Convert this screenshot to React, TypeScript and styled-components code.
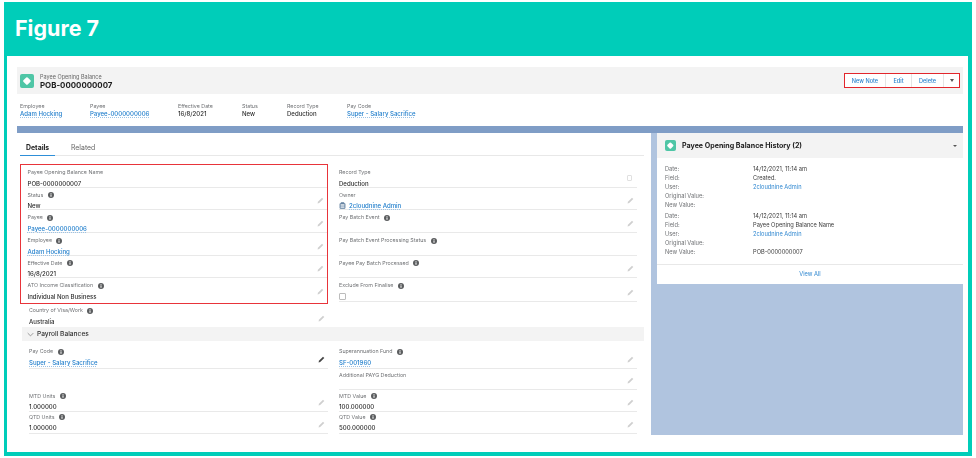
import React from "react";
import styled, { createGlobalStyle } from "styled-components";

const Global = createGlobalStyle`
  html, body { margin: 0; padding: 0; background: #fff; }
  body { font-family: Inter, "Liberation Sans", sans-serif; }
  * { box-sizing: border-box; }
`;

const Frame = styled.div`
  width: 968px;
  height: 454px;
  margin: 2px 0 0 4px;
  background: #00cdb9;
  display: flex;
  flex-direction: column;
  overflow: hidden;
`;

const Banner = styled.h1`
  height: 54px;
  margin: 0;
  padding: 13px 0 0 11px;
  color: #fff;
  font-family: Inter, "Open Sans", sans-serif;
  font-size: 21.5px;
  line-height: 26px;
  font-weight: 700;
`;

const Sheet = styled.div`
  flex: 1;
  margin: 0 4px 4px 3px;
  padding: 11px 5px 17px 10px;
  background: #fff;
  display: flex;
  flex-direction: column;
  filter: blur(0.35px);
`;

const RecordHeader = styled.header`
  height: 27px;
  flex: none;
  background: #f3f3f3;
  padding: 0 0 0 3px;
  display: flex;
  align-items: center;
`;

const Badge = styled.div<{ $size: number }>`
  width: ${(p) => p.$size}px;
  height: ${(p) => p.$size}px;
  flex: none;
  border-radius: 2px;
  background: #4fc6a6;
  display: flex;
  align-items: center;
  justify-content: center;
  &::after {
    content: "";
    width: ${(p) => p.$size * 0.42}px;
    height: ${(p) => p.$size * 0.42}px;
    background: #fff;
    border-radius: 1px;
    transform: rotate(45deg);
  }
`;

const HeaderText = styled.div`
  margin-left: 6px;
  flex: 1;
`;

const ObjectName = styled.div`
  font-size: 5.5px;
  line-height: 8px;
  color: #666;
  padding-top: 1px;
`;

const RecordName = styled.div`
  font-size: 7.9px;
  line-height: 9px;
  font-weight: 700;
  color: #1c1c1c;
`;

const ButtonGroup = styled.div`
  width: 116px;
  height: 15px;
  margin-right: 3px;
  border: 1px solid #e2262c;
  background: #fff;
  display: flex;
`;

const ActionButton = styled.button<{ $width: number }>`
  width: ${(p) => p.$width}px;
  flex: none;
  padding: 0;
  border: 0;
  border-right: 1px solid #e4e4e4;
  background: none;
  color: #2b84cf;
  font: 500 5.6px Inter, sans-serif;
  display: flex;
  align-items: center;
  justify-content: center;
  &:last-child { border-right: 0; }
`;

const Caret = styled.span`
  width: 0;
  height: 0;
  border-left: 2.5px solid transparent;
  border-right: 2.5px solid transparent;
  border-top: 3px solid #555;
`;

const Highlights = styled.div`
  height: 32px;
  flex: none;
  padding: 7.5px 0 0 3px;
  display: flex;
`;

const HighlightItem = styled.div<{ $width: number }>`
  width: ${(p) => p.$width}px;
  flex: none;
`;

const SmallLabel = styled.div`
  font-size: 5.3px;
  line-height: 8.5px;
  color: #6f7174;
  white-space: nowrap;
`;

const Value = styled.div<{ $link?: boolean }>`
  font-size: 6.05px;
  font-weight: 500;
  line-height: 8px;
  color: ${(p) => (p.$link ? "#2480cd" : "#2e2e2e")};
  white-space: nowrap;
  ${(p) => p.$link && "text-decoration: underline dotted #9cc3e6 0.5px; text-underline-offset: 1px;"}
`;

const Stripe = styled.div`
  height: 7px;
  flex: none;
  background: #7f9dc6;
`;

const Columns = styled.div`
  flex: 1;
  display: flex;
  background: #b0c4df;
`;

const MainPanel = styled.main`
  width: 634px;
  flex: none;
  background: #fff;
  margin-bottom: -17px;
  padding: 0 3px;
`;

const Tabs = styled.nav`
  height: 23px;
  margin-right: 4px;
  border-bottom: 1px solid #e8e8e8;
  display: flex;
`;

const Tab = styled.div<{ $active?: boolean }>`
  width: ${(p) => (p.$active ? 35 : 48)}px;
  padding-left: ${(p) => (p.$active ? 6 : 16)}px;
  height: 23px;
  font-size: 6.9px;
  line-height: 29px;
  font-weight: ${(p) => (p.$active ? 700 : 400)};
  color: ${(p) => (p.$active ? "#222" : "#666")};
  ${(p) => p.$active && "border-bottom: 1.5px solid #2e8fd8;"}
`;

const TopFields = styled.div`
  margin-top: 8px;
  display: flex;
`;

const Highlighted = styled.div`
  width: 308px;
  height: 140px;
  border: 1px solid #e8343a;
  padding: 0 0 0 6.5px;
`;

const RightStack = styled.div`
  width: 298px;
  margin-left: 11px;
  padding-top: 1px;
`;

const FieldBox = styled.div<{ $height?: number; $line?: boolean; $top?: number }>`
  position: relative;
  height: ${(p) => p.$height ?? 22.7}px;
  padding-top: ${(p) => p.$top ?? 3}px;
  border-bottom: ${(p) => (p.$line === false ? "0" : "1px solid #e9e9e9")};
`;

const FieldLabel = styled.div`
  height: 9px;
  font-size: 5.3px;
  line-height: 9px;
  color: #707275;
  white-space: nowrap;
  display: flex;
  align-items: center;
  gap: 4.5px;
`;

const FieldValue = styled(Value)`
  margin-top: 1.5px;
  height: 9px;
  line-height: 9px;
  display: flex;
  align-items: center;
  gap: 3px;
`;

const EditIcon = styled.svg<{ $dark?: boolean }>`
  position: absolute;
  right: 3px;
  bottom: 5px;
  width: 7px;
  height: 7px;
  fill: ${(p) => (p.$dark ? "#444" : "#cfcfcf")};
`;

const LockBox = styled.span`
  position: absolute;
  right: 5px;
  bottom: 6px;
  width: 5px;
  height: 6px;
  border: 0.6px solid #e0e0e0;
  border-radius: 1px;
`;

const Check = styled.span`
  width: 7px;
  height: 7px;
  margin-top: 1px;
  display: block;
  border: 0.7px solid #bcbcbc;
  border-radius: 1px;
`;

const LoneField = styled.div`
  width: 299px;
  margin-left: 9px;
`;

const SectionBar = styled.div`
  width: 622px;
  height: 14px;
  margin-left: 2px;
  padding-left: 5px;
  background: #f3f3f3;
  display: flex;
  align-items: center;
  gap: 3px;
  font-size: 6.6px;
  font-weight: 500;
  color: #333;
`;

const FieldGrid = styled.div`
  margin: 3px 0 0 9px;
  display: grid;
  grid-template-columns: 299px 298px;
  column-gap: 11px;
`;

const Aside = styled.aside`
  flex: 1;
  padding-left: 6px;
`;

const HistoryCard = styled.section`
  background: #fff;
`;

const CardHeader = styled.div`
  height: 25px;
  padding: 0 6px 0 8px;
  background: #f3f3f3;
  display: flex;
  align-items: center;
  gap: 6px;
  font-size: 7.1px;
  font-weight: 700;
  color: #222;
`;

const CardTitle = styled.span`
  flex: 1;
`;

const CardHeaderCaret = styled(Caret)`
  border-left-width: 2px;
  border-right-width: 2px;
  border-top-width: 2.5px;
`;

const Entry = styled.dl`
  margin: 0;
  padding: 7px 0 0 8px;
  display: grid;
  grid-template-columns: 88px 1fr;
  grid-auto-rows: 8.95px;
  font-size: 5.7px;
  line-height: 8.95px;
  & + & { padding-top: 2.5px; }
`;

const EntryLabel = styled.dt`
  color: #6f7174;
`;

const EntryValue = styled.dd<{ $link?: boolean }>`
  margin: 0;
  color: ${(p) => (p.$link ? "#2f87d0" : "#3a3a3a")};
`;

const CardFooter = styled.div`
  height: 20px;
  margin-top: 7px;
  border-top: 1px solid #e8e8e8;
  color: #2f87d0;
  font-size: 5.7px;
  line-height: 18px;
  text-align: center;
`;

const Info = () => (
  <svg width="6" height="6" viewBox="0 0 12 12">
    <circle cx="6" cy="6" r="6" fill="#5a5c5e" />
    <rect x="5" y="5" width="2" height="4.5" fill="#fff" />
    <rect x="5" y="2.5" width="2" height="1.8" fill="#fff" />
  </svg>
);

const Pencil = ({ dark }: { dark?: boolean }) => (
  <EditIcon $dark={dark} viewBox="0 0 12 12">
    <path d="M8.6 1.2l2.2 2.2-7 7L1 11l.6-2.8z" />
  </EditIcon>
);

const OwnerIcon = () => (
  <svg width="7" height="7" viewBox="0 0 12 12">
    <rect x="1" y="2" width="10" height="9.5" rx="1.5" fill="#5d7c9c" />
    <rect x="3" y="0.5" width="6" height="2.5" rx="1" fill="#5d7c9c" />
    <rect x="2.6" y="4" width="6.8" height="2.2" fill="#fff" />
    <rect x="2.6" y="7.4" width="6.8" height="2.6" fill="#dfe7ef" />
  </svg>
);

const Chevron = () => (
  <svg width="7" height="5" viewBox="0 0 10 6" fill="none" stroke="#777" strokeWidth="1">
    <path d="M1 1l4 4 4-4" />
  </svg>
);

type FieldProps = {
  label: string;
  value?: string;
  link?: boolean;
  info?: boolean;
  edit?: "none" | "light" | "dark" | "lock";
  height?: number;
  top?: number;
  line?: boolean;
  children?: React.ReactNode;
};

const Field = ({ label, value, link, info = true, edit = "light", height, top, line, children }: FieldProps) => (
  <FieldBox $height={height} $line={line} $top={top}>
    <FieldLabel>
      {label}
      {info && <Info />}
    </FieldLabel>
    <FieldValue $link={link}>
      {children}
      {value}
    </FieldValue>
    {edit === "light" && <Pencil />}
    {edit === "dark" && <Pencil dark />}
    {edit === "lock" && <LockBox />}
  </FieldBox>
);

const highlights = [
  { label: "Employee", value: "Adam Hocking", link: true, width: 70 },
  { label: "Payee", value: "Payee-0000000006", link: true, width: 88 },
  { label: "Effective Date", value: "16/8/2021", width: 64 },
  { label: "Status", value: "New", width: 45 },
  { label: "Record Type", value: "Deduction", width: 60 },
  { label: "Pay Code", value: "Super - Salary Sacrifice", link: true, width: 100 },
];

const history = [
  { when: "14/12/2021, 11:14 am", field: "Created.", value: "" },
  { when: "14/12/2021, 11:14 am", field: "Payee Opening Balance Name", value: "POB-0000000007" },
];

export default function App() {
  return (
    <>
      <Global />
      <Frame>
        <Banner>Figure 7</Banner>
        <Sheet>
          <RecordHeader>
            <Badge $size={14} />
            <HeaderText>
              <ObjectName>Payee Opening Balance</ObjectName>
              <RecordName>POB-0000000007</RecordName>
            </HeaderText>
            <ButtonGroup>
              <ActionButton $width={41}>New Note</ActionButton>
              <ActionButton $width={26}>Edit</ActionButton>
              <ActionButton $width={32}>Delete</ActionButton>
              <ActionButton $width={15}>
                <Caret />
              </ActionButton>
            </ButtonGroup>
          </RecordHeader>

          <Highlights>
            {highlights.map((h) => (
              <HighlightItem key={h.label} $width={h.width}>
                <SmallLabel>{h.label}</SmallLabel>
                <Value $link={h.link}>{h.value}</Value>
              </HighlightItem>
            ))}
          </Highlights>

          <Stripe />

          <Columns>
            <MainPanel>
              <Tabs>
                <Tab $active>Details</Tab>
                <Tab>Related</Tab>
              </Tabs>

              <TopFields>
                <Highlighted>
                  <Field label="Payee Opening Balance Name" value="POB-0000000007" info={false} edit="none" />
                  <Field label="Status" value="New" />
                  <Field label="Payee" value="Payee-0000000006" link />
                  <Field label="Employee" value="Adam Hocking" link />
                  <Field label="Effective Date" value="16/8/2021" />
                  <Field label="ATO Income Classification" value="Individual Non Business" line={false} height={22} />
                </Highlighted>
                <RightStack>
                  <Field label="Record Type" value="Deduction" info={false} edit="lock" />
                  <Field label="Owner" value="2cloudnine Admin" link info={false}>
                    <OwnerIcon />
                  </Field>
                  <Field label="Pay Batch Event" />
                  <Field label="Pay Batch Event Processing Status" edit="none" />
                  <Field label="Payee Pay Batch Processed" />
                  <Field label="Exclude From Finalise" height={23.5}>
                    <Check />
                  </Field>
                </RightStack>
              </TopFields>

              <LoneField>
                <Field label="Country of Visa/Work" value="Australia" line={false} height={23} top={2} />
              </LoneField>

              <SectionBar>
                <Chevron />
                Payroll Balances
              </SectionBar>

              <FieldGrid>
                <Field label="Pay Code" value="Super - Salary Sacrifice" link edit="dark" height={25} />
                <Field label="Superannuation Fund" value="SF-001960" link height={25} />
                <FieldBox $line={false} $height={21} />
                <Field label="Additional PAYG Deduction" info={false} height={21} top={1.5} />
                <Field label="MTD Units" value="1.000000" height={22} top={1.5} />
                <Field label="MTD Value" value="100.000000" height={22} top={1.5} />
                <Field label="QTD Units" value="1.000000" height={21.5} top={0.5} />
                <Field label="QTD Value" value="500.000000" height={21.5} top={0.5} />
              </FieldGrid>
            </MainPanel>

            <Aside>
              <HistoryCard>
                <CardHeader>
                  <Badge $size={11} />
                  <CardTitle>Payee Opening Balance History (2)</CardTitle>
                  <CardHeaderCaret />
                </CardHeader>
                {history.map((e, i) => (
                  <Entry key={i}>
                    <EntryLabel>Date:</EntryLabel>
                    <EntryValue>{e.when}</EntryValue>
                    <EntryLabel>Field:</EntryLabel>
                    <EntryValue>{e.field}</EntryValue>
                    <EntryLabel>User:</EntryLabel>
                    <EntryValue $link>2cloudnine Admin</EntryValue>
                    <EntryLabel>Original Value:</EntryLabel>
                    <EntryValue />
                    <EntryLabel>New Value:</EntryLabel>
                    <EntryValue>{e.value}</EntryValue>
                  </Entry>
                ))}
                <CardFooter>View All</CardFooter>
              </HistoryCard>
            </Aside>
          </Columns>
        </Sheet>
      </Frame>
    </>
  );
}
